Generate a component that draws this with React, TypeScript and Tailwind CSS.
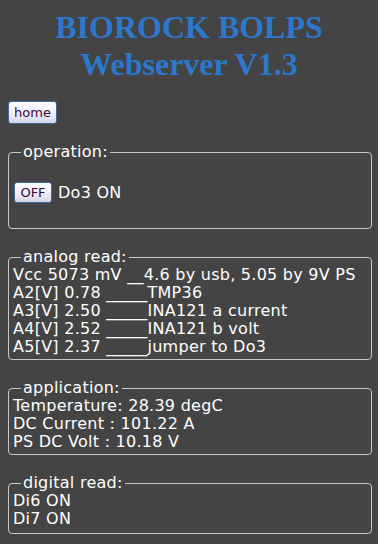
import React from "react";

function Box({ title, children, className = "" }: { title: string; children: React.ReactNode; className?: string }) {
  return (
    <fieldset className={`rounded-[4px] border border-[#c8c8c8] pl-1 pr-1 ${className}`}>
      <legend className="ml-2 px-[2px] text-[16px] leading-[18px]">{title}</legend>
      {children}
    </fieldset>
  );
}

const btn =
  "rounded-[3px] border border-[#3d6b9e] bg-gradient-to-b from-white via-[#f0f0fa] to-[#d6d6ec] text-[13px] leading-none tracking-normal text-[#3a0640] font-['DejaVu_Sans',sans-serif] flex items-center justify-center";

export default function App() {
  return (
    <div className="min-h-[544px] bg-[#444444] pt-[9px] pb-2 pl-2 pr-[6px] text-white font-['DejaVu_Sans',Verdana,sans-serif] text-[16px] leading-[18px] tracking-[0.26px]">
      <h1 className="-ml-2 -mr-[6px] text-center font-['Liberation_Serif','Times_New_Roman',serif] text-[32px] font-bold leading-[37px] tracking-normal text-[#2b78cc]">
        BIOROCK BOLPS
        <br />
        Webserver V1.3
      </h1>
      <div className="mt-[18px] flex flex-col gap-[19px]">
        <div>
          <button className={`${btn} h-[23px] w-[49px]`}>home</button>
        </div>
        <Box title="operation:" className="pt-[21px] pb-[25px]">
          <div className="flex items-center">
            <button className={`${btn} ml-px h-[21px] w-[38px]`}>OFF</button>
            <span className="ml-[6px]">Do3 ON</span>
          </div>
        </Box>
        <Box title="analog read:" className="pb-[3px]">
          <div>Vcc 5073 mV __4.6 by usb, 5.05 by 9V PS</div>
          <div>A2[V] 0.78 _____TMP36</div>
          <div>A3[V] 2.50 _____INA121 a current</div>
          <div>A4[V] 2.52 _____INA121 b volt</div>
          <div>A5[V] 2.37 _____jumper to Do3</div>
        </Box>
        <Box title="application:" className="pb-[3px]">
          <div>Temperature: 28.39 degC</div>
          <div>DC Current : 101.22 A</div>
          <div>PS DC Volt : 10.18 V</div>
        </Box>
        <Box title="digital read:" className="pb-[5px]">
          <div>Di6 ON</div>
          <div>Di7 ON</div>
        </Box>
      </div>
    </div>
  );
}
